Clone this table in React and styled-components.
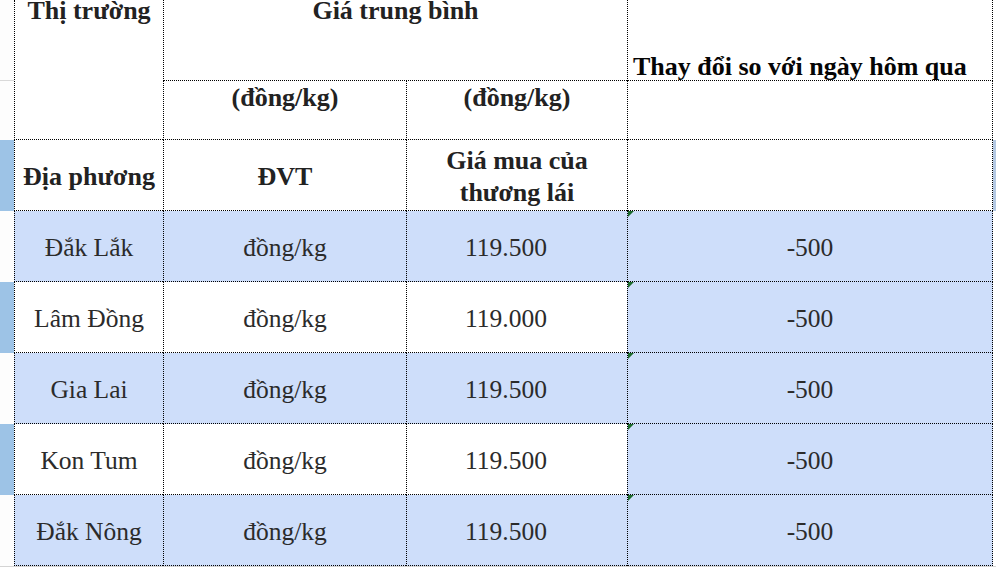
import React from "react";
import styled, { createGlobalStyle, css } from "styled-components";

const rows = [
	{ place: "Đắk Lắk", unit: "đồng/kg", price: "119.500", change: "-500", shaded: true },
	{ place: "Lâm Đồng", unit: "đồng/kg", price: "119.000", change: "-500", shaded: false },
	{ place: "Gia Lai", unit: "đồng/kg", price: "119.500", change: "-500", shaded: true },
	{ place: "Kon Tum", unit: "đồng/kg", price: "119.500", change: "-500", shaded: false },
	{ place: "Đắk Nông", unit: "đồng/kg", price: "119.500", change: "-500", shaded: true },
];

const GlobalStyle = createGlobalStyle`
	html, body {
		margin: 0;
		padding: 0;
		background: #ffffff;
	}
	body {
		font-family: "Liberation Serif", "Times New Roman", serif;
		overflow: hidden;
	}
	* {
		box-sizing: border-box;
	}
`;

function App() {
	return (
		<>
			<GlobalStyle />
			<Sheet>
				{/* row 1 */}
				<RowHead $line />
				<Cell $rowSpan={2} $v="start">
					<Label $bold $tight>Thị trường</Label>
				</Cell>
				<Cell $colSpan={2} $v="start">
					<Label $bold $tight>Giá trung bình</Label>
				</Cell>
				<Cell $last $v="end" $h="start">
					<Label $bold $dark $drop>Thay đổi so với ngày hôm qua</Label>
				</Cell>
				<EdgeHead />

				{/* row 2 */}
				<RowHead />
				<Cell $v="start">
					<Label $bold $nudge>(đồng/kg)</Label>
				</Cell>
				<Cell $v="start">
					<Label $bold $nudge>(đồng/kg)</Label>
				</Cell>
				<Cell $last />
				<EdgeHead />

				{/* row 3 */}
				<RowHead $active />
				<Cell>
					<Label $bold>Địa phương</Label>
				</Cell>
				<Cell>
					<Label $bold>ĐVT</Label>
				</Cell>
				<Cell>
					<Label $bold $wrap>
						Giá mua của
						<br />
						thương lái
					</Label>
				</Cell>
				<Cell $last />
				<EdgeHead $active />

				{rows.map((row, i) => (
					<React.Fragment key={row.place}>
						<RowHead $active={i % 2 === 1} />
						<Cell $fill={row.shaded}>
							<Label>{row.place}</Label>
						</Cell>
						<Cell $fill={row.shaded}>
							<Label>{row.unit}</Label>
						</Cell>
						<Cell $fill={row.shaded} $indent>
							<Label>{row.price}</Label>
						</Cell>
						<Cell $fill $last $flag>
							<Label>{row.change}</Label>
						</Cell>
						<EdgeHead />
					</React.Fragment>
				))}
			</Sheet>
			<Footer />
		</>
	);
}

const Sheet = styled.div`
	display: grid;
	grid-template-columns: 14px 149px 243px 221px 366px 3px;
	grid-template-rows: 81px 59px repeat(6, 71px);
	width: 996px;
`;

const RowHead = styled.div`
	background: ${({ $active }) => ($active ? "#9dc3e6" : "#fdfdfd")};
	border-bottom: 1px solid ${({ $line }) => ($line ? "#d9d9d9" : "transparent")};
`;

const EdgeHead = styled.div`
	background: ${({ $active }) => ($active ? "#b3c8e2" : "#ffffff")};
`;

const Cell = styled.div`
	position: relative;
	display: flex;
	justify-content: ${({ $h }) => ($h === "start" ? "flex-start" : "center")};
	align-items: ${({ $v }) =>
		$v === "start" ? "flex-start" : $v === "end" ? "flex-end" : "center"};
	padding: ${({ $v, $h }) =>
		$v ? `0 0 0 ${$h === "start" ? "5px" : "0"}` : "4px 0 0"};
	${({ $indent }) =>
		$indent &&
		css`
			padding-right: 22px;
		`}
	grid-row: span ${({ $rowSpan }) => $rowSpan || 1};
	grid-column: span ${({ $colSpan }) => $colSpan || 1};
	background: ${({ $fill }) => ($fill ? "#cedefa" : "#ffffff")};
	border-left: 1px dotted #000;
	border-bottom: 1px dotted #000;
	${({ $last }) =>
		$last &&
		css`
			border-right: 1px dotted #000;
		`}

	${({ $flag }) =>
		$flag &&
		css`
			&::before {
				content: "";
				position: absolute;
				top: 0;
				left: 0;
				border-top: 6px solid #1d6b2c;
				border-right: 6px solid transparent;
			}
		`}
`;

const Label = styled.div`
	font-family: "Liberation Serif", "Times New Roman", serif;
	font-size: ${({ $bold }) => ($bold ? "26px" : "25.5px")};
	font-weight: ${({ $bold }) => ($bold ? 700 : 400)};
	color: ${({ $dark, $bold }) => ($dark ? "#050505" : $bold ? "#222222" : "#2b2b2b")};
	text-align: center;
	white-space: nowrap;
	line-height: ${({ $wrap, $tight }) => ($wrap ? "32px" : $tight ? "22px" : "normal")};
	margin-top: ${({ $nudge }) => ($nudge ? "2px" : "0")};
	margin-bottom: ${({ $drop }) => ($drop ? "-2px" : "0")};
`;

const Footer = styled.div`
	height: 3px;
	border-top: 1px solid #d4d4d4;
	width: 996px;
`;

export default App;
